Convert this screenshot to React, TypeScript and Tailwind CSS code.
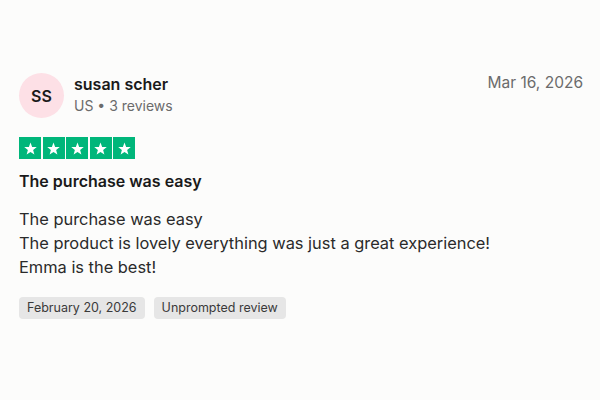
import React from "react";

function Star() {
  return (
    <div className="flex h-[22px] w-[22px] items-center justify-center bg-[#00b67a]">
      <svg viewBox="0 0 24 24" className="h-[15px] w-[15px]" fill="#ffffff">
        <path d="M12 2.5l2.6 6.9 7.4.3-5.8 4.6 2 7.2L12 17.4l-6.2 4.1 2-7.2L2 9.7l7.4-.3z" />
      </svg>
    </div>
  );
}

export default function App() {
  return (
    <div
      className="h-[400px] w-[600px] bg-[#fcfcfb] px-[19px] pt-[73px] text-[#1a1a1a]"
      style={{ fontFamily: "Inter, 'Liberation Sans', sans-serif" }}
    >
      <div className="flex items-start justify-between">
        <div className="flex items-center gap-[10px]">
          <div className="flex h-[45px] w-[45px] items-center justify-center rounded-full bg-[#fde0e6] text-[16px] font-semibold text-[#1a1a1a]">
            SS
          </div>
          <div className="-mt-[3px] flex flex-col">
            <span className="text-[16px] font-semibold leading-[22px]">susan scher</span>
            <span className="mt-[1px] text-[14px] leading-[20px] text-[#6b6b6b]">US • 3 reviews</span>
          </div>
        </div>
        <span className="-mr-[2px] text-[15.5px] leading-[20px] text-[#6b6b6b]">Mar 16, 2026</span>
      </div>

      <div className="mt-[19px] flex gap-[1.5px]">
        <Star />
        <Star />
        <Star />
        <Star />
        <Star />
      </div>

      <h2 className="mt-[11px] text-[16px] font-semibold leading-[22px]">The purchase was easy</h2>

      <div className="mt-[15px] text-[16.4px] leading-[24px] text-[#2a2a2a]">
        <p>The purchase was easy</p>
        <p>The product is lovely everything was just a great experience!</p>
        <p>Emma is the best!</p>
      </div>

      <div className="mt-[18px] flex gap-[9px]">
        <span className="rounded-[4px] bg-[#e6e6e6] px-[8px] py-[3px] text-[12.5px] leading-[16px] text-[#3a3a3a]">
          February 20, 2026
        </span>
        <span className="rounded-[4px] bg-[#e6e6e6] px-[8px] py-[3px] text-[12.5px] leading-[16px] text-[#3a3a3a]">
          Unprompted review
        </span>
      </div>
    </div>
  );
}
